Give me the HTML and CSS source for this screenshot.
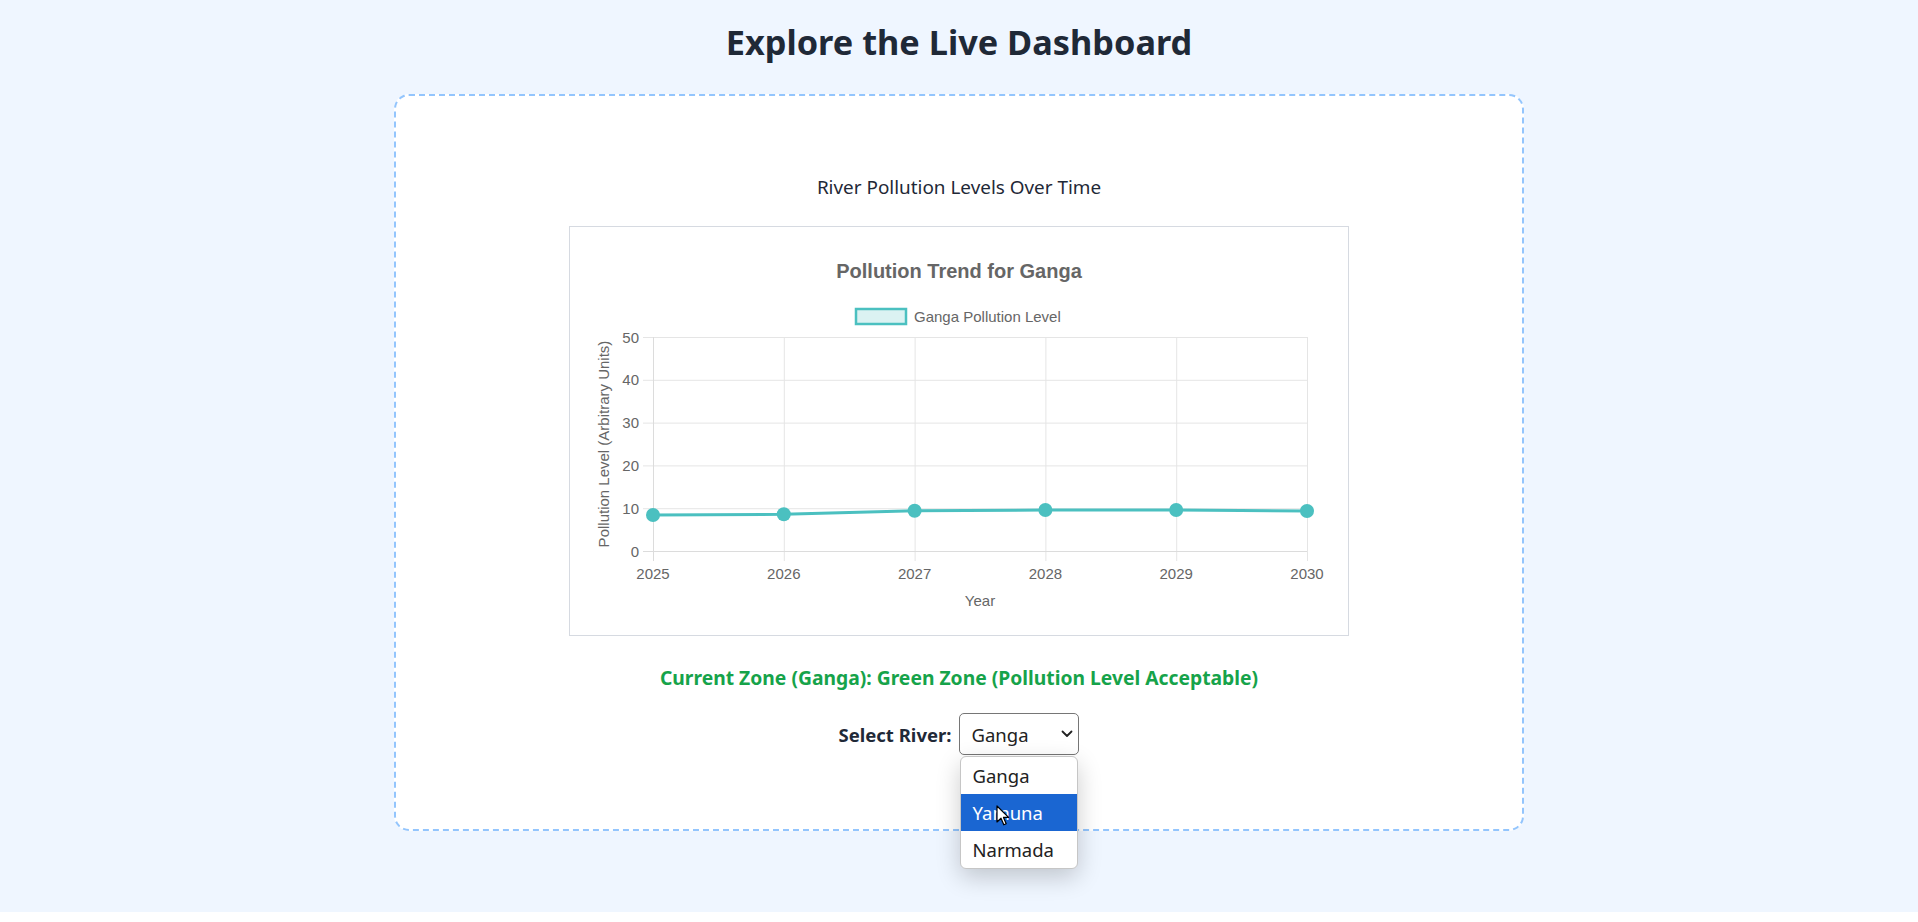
FILE: index.html
```html
<!DOCTYPE html>
<html lang="en">
<head>
<meta charset="utf-8">
<title>Explore the Live Dashboard</title>
<link rel="stylesheet" href="styles.css">
</head>
<body>
<section class="dash-section">
  <h2 class="dash-title">Explore the Live Dashboard</h2>
  <div class="dash-card">
    <h3 class="chart-caption">River Pollution Levels Over Time</h3>
    <div class="chart-box">
      <svg class="chart-svg" width="778" height="408" viewBox="0 0 778 408" xmlns="http://www.w3.org/2000/svg">
        <text class="c-title" x="389" y="51" text-anchor="middle">Pollution Trend for Ganga</text>
        <rect x="286" y="82" width="50" height="15" fill="rgba(75,192,192,0.2)" stroke="#4bc0c0" stroke-width="2.5"/>
        <text class="c-text" x="344" y="95">Ganga Pollution Level</text>
        <g stroke="#e5e5e5" stroke-width="1">
          <line x1="73" y1="110.5" x2="737" y2="110.5"/>
          <line x1="73" y1="153.3" x2="737" y2="153.3"/>
          <line x1="73" y1="196.1" x2="737" y2="196.1"/>
          <line x1="73" y1="238.9" x2="737" y2="238.9"/>
          <line x1="73" y1="281.7" x2="737" y2="281.7"/>
          <line x1="83.5" y1="110" x2="83.5" y2="334"/>
          <line x1="214.3" y1="110" x2="214.3" y2="334"/>
          <line x1="345.1" y1="110" x2="345.1" y2="334"/>
          <line x1="475.9" y1="110" x2="475.9" y2="334"/>
          <line x1="606.7" y1="110" x2="606.7" y2="334"/>
          <line x1="737.5" y1="110" x2="737.5" y2="334"/>
        </g>
        <line x1="73" y1="324.5" x2="737" y2="324.5" stroke="#dcdcdc" stroke-width="1"/>
        <line x1="83.5" y1="110" x2="83.5" y2="334" stroke="#dcdcdc" stroke-width="1"/>
        <g class="c-text" text-anchor="end">
          <text x="69" y="115.5">50</text>
          <text x="69" y="158.3">40</text>
          <text x="69" y="201.1">30</text>
          <text x="69" y="243.9">20</text>
          <text x="69" y="286.7">10</text>
          <text x="69" y="329.5">0</text>
        </g>
        <g class="c-text" text-anchor="middle">
          <text x="83" y="352">2025</text>
          <text x="213.8" y="352">2026</text>
          <text x="344.6" y="352">2027</text>
          <text x="475.4" y="352">2028</text>
          <text x="606.2" y="352">2029</text>
          <text x="737" y="352">2030</text>
          <text x="410" y="379">Year</text>
          <text transform="translate(39,217) rotate(-90)">Pollution Level (Arbitrary Units)</text>
        </g>
        <polyline points="83,288 213.8,287.3 344.6,283.7 475.4,283 606.2,283 737,284" fill="none" stroke="#4bc0c0" stroke-width="3"/>
        <g fill="#4bc0c0">
          <circle cx="83" cy="288" r="7"/>
          <circle cx="213.8" cy="287.3" r="7"/>
          <circle cx="344.6" cy="283.7" r="7"/>
          <circle cx="475.4" cy="283" r="7"/>
          <circle cx="606.2" cy="283" r="7"/>
          <circle cx="737" cy="284" r="7"/>
        </g>
      </svg>
    </div>
    <p class="zone-status">Current Zone (Ganga): Green Zone (Pollution Level Acceptable)</p>
    <div class="select-row">
      <span class="select-label">Select River:</span>
      <div class="select-wrap">
        <div class="select-box">
          <span class="select-value">Ganga</span>
          <svg class="select-chevron" width="12" height="8" viewBox="0 0 12 8"><path d="M1.5 1.5 L6 6 L10.5 1.5" fill="none" stroke="#222" stroke-width="1.8" stroke-linecap="round" stroke-linejoin="round"/></svg>
        </div>
        <ul class="select-menu">
          <li class="opt">Ganga</li>
          <li class="opt opt-active">Yamuna</li>
          <li class="opt">Narmada</li>
        </ul>
        <svg class="cursor" width="14" height="22" viewBox="0 0 14 22"><path d="M1 1 L1 17 L5 13.2 L7.8 19.8 L10.2 18.8 L7.5 12.4 L12.6 12.4 Z" fill="#fff" stroke="#000" stroke-width="1.2" stroke-linejoin="round"/></svg>
      </div>
    </div>
  </div>
</section>
</body>
</html>
```
FILE: styles.css
```css
html, body {
  margin: 0;
  padding: 0;
  background: #ffffff;
}
body {
  font-family: "Noto Sans", "Open Sans", sans-serif;
  color: #1f2937;
}
.dash-section {
  height: 912px;
  background: #eff6ff;
  box-sizing: border-box;
  padding-top: 18px;
}
.dash-title {
  margin: 0;
  text-align: center;
  font-size: 34.3px;
  line-height: 48px;
  font-weight: 700;
  color: #1f2937;
}
.dash-card {
  box-sizing: border-box;
  width: 1130px;
  height: 737px;
  margin: 28px auto 0;
  background: #ffffff;
  border: 2px dashed #93c5fd;
  border-radius: 15px;
  padding-top: 77px;
  display: flex;
  flex-direction: column;
  align-items: center;
}
.chart-caption {
  margin: 0 0 25px;
  font-size: 18.9px;
  line-height: 28px;
  font-weight: 400;
  color: #1f2937;
}
.chart-box {
  box-sizing: border-box;
  width: 780px;
  height: 410px;
  border: 1px solid #d6dae1;
  background: #fff;
}
.chart-svg {
  display: block;
}
.c-title {
  font-family: "Liberation Sans", Arial, sans-serif;
  font-size: 20px;
  font-weight: 700;
  fill: #666666;
}
.c-text {
  font-family: "Liberation Sans", Arial, sans-serif;
  font-size: 15px;
  fill: #666666;
}
.zone-status {
  margin: 28px 0 0;
  font-size: 19.3px;
  line-height: 28px;
  font-weight: 700;
  color: #16a34a;
}
.select-row {
  margin-top: 21px;
  display: flex;
  align-items: center;
  gap: 8px;
}
.select-label {
  font-size: 18.5px;
  font-weight: 700;
  color: #1f2937;
}
.select-wrap {
  position: relative;
}
.select-box {
  box-sizing: border-box;
  width: 120px;
  height: 42px;
  border: 1px solid #767676;
  border-radius: 5px;
  background: #fff;
  display: flex;
  align-items: center;
  justify-content: space-between;
  padding: 0 5px 0 11px;
}
.select-value {
  font-size: 18.5px;
  color: #222;
}
.select-chevron {
  display: block;
}
.select-menu {
  position: absolute;
  z-index: 5;
  top: 43px;
  left: 1px;
  box-sizing: border-box;
  width: 118px;
  margin: 0;
  padding: 0;
  list-style: none;
  background: #fff;
  border: 1px solid #c6c6c6;
  border-radius: 6px;
  box-shadow: 0 8px 24px rgba(0, 0, 0, 0.2);
  overflow: hidden;
}
.opt {
  height: 37px;
  line-height: 37px;
  padding-left: 11px;
  font-size: 18.5px;
  color: #222;
}
.opt-active {
  background: #1a66d2;
  color: #fff;
}
.cursor {
  position: absolute;
  z-index: 6;
  left: 37px;
  top: 92px;
}
```
